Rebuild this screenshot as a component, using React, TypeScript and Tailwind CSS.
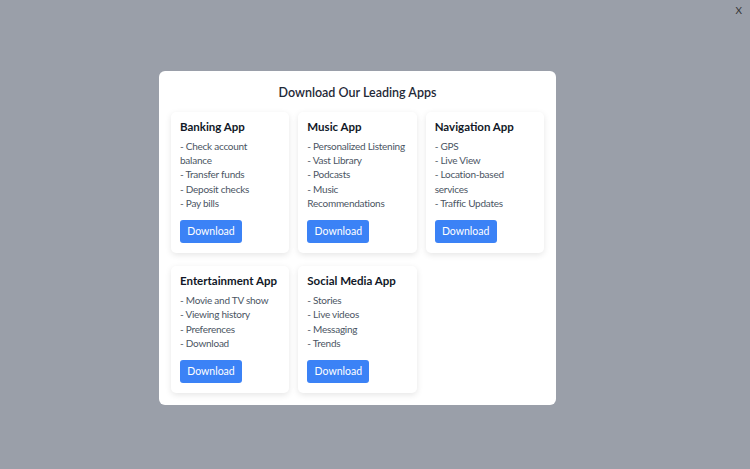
import React from "react";

interface AppInfo {
  name: string;
  features: string[];
}

const apps: AppInfo[] = [
  { name: "Banking App", features: ["Check account balance", "Transfer funds", "Deposit checks", "Pay bills"] },
  { name: "Music App", features: ["Personalized Listening", "Vast Library", "Podcasts", "Music Recommendations"] },
  { name: "Navigation App", features: ["GPS", "Live View", "Location-based services", "Traffic Updates"] },
  { name: "Entertainment App", features: ["Movie and TV show", "Viewing history", "Preferences", "Download"] },
  { name: "Social Media App", features: ["Stories", "Live videos", "Messaging", "Trends"] },
];

function AppCard({ app }: { app: AppInfo }) {
  return (
    <div className="bg-white rounded-[5px] shadow-[0_2px_6px_rgba(0,0,0,0.1)] px-[9px] pt-[7px] pb-[10px]">
      <h3 className="text-[11.5px] leading-[16px] font-bold text-[#111827] mb-[4px] whitespace-nowrap">{app.name}</h3>
      <ul className="text-[10px] tracking-[-0.25px] leading-[14.25px] text-[#4b5563]">
        {app.features.map((f) => (
          <li key={f}>- {f}</li>
        ))}
      </ul>
      <button className="mt-[10px] h-[23px] w-[62px] rounded-[3px] bg-[#3b82f6] text-white text-[10.5px]">
        Download
      </button>
    </div>
  );
}

export default function App() {
  return (
    <div
      className="relative w-[750px] h-[469px] bg-[#9a9fa9] flex items-center justify-center"
      style={{ fontFamily: 'Lato, "Noto Sans", sans-serif' }}
    >
      <button className="absolute top-[3px] right-[6px] text-[10px] text-[#333] leading-none p-[2px]">X</button>
      <div className="w-[397px] bg-white rounded-[6px] p-[12px] mt-[7px] mr-[35px]">
        <h2 className="text-center text-[12.5px] leading-[20px] font-semibold text-[#1f2937] mb-[9px]">
          Download Our Leading Apps
        </h2>
        <div className="grid grid-cols-3 gap-x-[9px] gap-y-[13px]">
          {apps.map((a) => (
            <AppCard key={a.name} app={a} />
          ))}
        </div>
      </div>
    </div>
  );
}
